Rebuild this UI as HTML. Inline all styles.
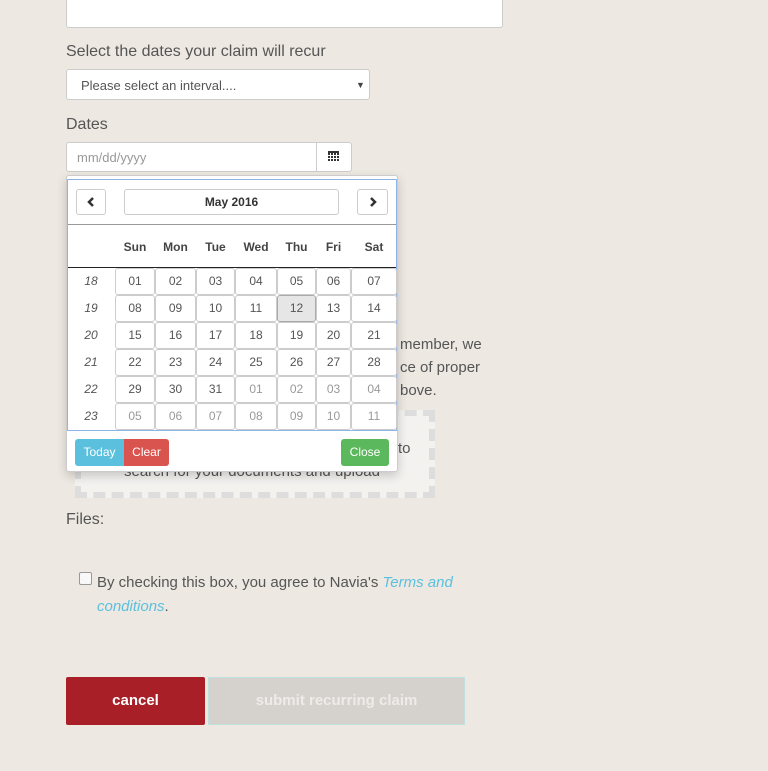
<!DOCTYPE html>
<html><head><style>
body{margin:0;width:768px;height:771px;background:#ede8e2;font-family:"Liberation Sans",sans-serif;color:#444;position:relative;overflow:hidden}
.a{position:absolute}
.lbl{font-size:16px;color:#555}
.box{background:#fff;border:1px solid #ccc;border-radius:3px;box-sizing:border-box}
.cell{position:absolute;background:#fff;border:1px solid #ccc;border-radius:3px;box-sizing:border-box;font-size:12px;color:#555;text-align:center;line-height:25px}
.wk{position:absolute;font-size:12px;font-style:italic;color:#555;width:48px;text-align:center;line-height:27px}
.dn{position:absolute;font-size:12px;font-weight:bold;color:#444;text-align:center;top:240px}
.btn{position:absolute;font-size:12px;color:#fff;text-align:center;line-height:27px;top:439px;height:27px}
.p{font-size:15px;color:#555}
</style></head><body>
<div class="a box" style="left:66px;top:-5px;width:437px;height:33px"></div>
<div class="a lbl" style="left:66px;top:43px">Select the dates your claim will recur</div>
<div class="a box" style="left:66px;top:69px;width:304px;height:31px"></div>
<div class="a" style="left:81px;top:78px;font-size:13px;color:#555">Please select an interval....</div>
<div class="a" style="left:356px;top:80px;font-size:9px;color:#444">▼</div>
<div class="a lbl" style="left:66px;top:116px">Dates</div>
<div class="a box" style="left:66px;top:142px;width:286px;height:30px"></div>
<div class="a" style="left:316px;top:142px;width:1px;height:30px;background:#ccc"></div>
<div class="a" style="left:77px;top:150px;font-size:13px;color:#999">mm/dd/yyyy</div>
<div class="a" style="left:328px;top:151px;width:11px;height:10px;background:#333;border-top:2px solid #333;box-sizing:border-box;background-image:repeating-linear-gradient(90deg,transparent 0 2px,#fff 2px 3px),repeating-linear-gradient(0deg,transparent 0 2px,#fff 2px 3px)"></div>

<div class="a p" style="left:400px;top:333px;line-height:23px">member, we<br>ce of proper<br>bove.</div>
<div class="a" style="left:75px;top:410px;width:360px;height:88px;background:#f4f2ef;border:6px dashed #ddd;box-sizing:border-box"></div>
<div class="a p" style="left:398px;top:440px">to</div>
<div class="a p" style="left:124px;top:463px">search for your documents and upload</div>

<div class="a" style="left:66px;top:175px;width:332px;height:297px;background:#fff;border:1px solid #ccc;border-radius:3px;box-shadow:0 4px 10px rgba(0,0,0,.18);box-sizing:border-box"></div>
<div class="a" style="left:67px;top:179px;width:330px;height:252px;border:1px solid #8fb4e8;box-sizing:border-box"></div>
<div class="a box" style="left:76px;top:189px;width:30px;height:26px"><svg width="28" height="24" style="position:absolute;left:0;top:0"><path d="M16 8 L12 12 L16 16" stroke="#333" stroke-width="2.5" fill="none"/></svg></div>
<div class="a box" style="left:124px;top:189px;width:215px;height:26px;text-align:center;font-weight:bold;font-size:12px;line-height:24px;color:#333">May 2016</div>
<div class="a box" style="left:357px;top:189px;width:31px;height:26px"><svg width="29" height="24" style="position:absolute;left:0;top:0"><path d="M13 8 L17 12 L13 16" stroke="#333" stroke-width="2.5" fill="none"/></svg></div>
<div class="a" style="left:68px;top:224px;width:328px;height:1px;background:#999"></div>
<div class="a" style="left:68px;top:267px;width:328px;height:1px;background:#222"></div>
<div class="dn" style="left:115px;width:40px">Sun</div>
<div class="dn" style="left:155px;width:41px">Mon</div>
<div class="dn" style="left:196px;width:39px">Tue</div>
<div class="dn" style="left:235px;width:42px">Wed</div>
<div class="dn" style="left:277px;width:39px">Thu</div>
<div class="dn" style="left:316px;width:35px">Fri</div>
<div class="dn" style="left:351px;width:46px">Sat</div>
<div id="g"></div>
<script>
var xs=[115,155,196,235,277,316,351,397],w=['18','19','20','21','22','23'],h='';
var d=[];for(var i=1;i<=31;i++)d.push([i,1]);for(i=1;i<=11;i++)d.push([i,0]);
for(var r=0;r<6;r++){var y=268+r*27;h+='<div class="wk" style="left:67px;top:'+y+'px">'+w[r]+'</div>';
for(var c=0;c<7;c++){var k=d[r*7+c],t=(k[0]<10?'0':'')+k[0];var bg=(k[1]&&k[0]==12)?'background:#e6e6e6;border-color:#aaa;':'';
h+='<div class="cell" style="'+bg+'left:'+xs[c]+'px;top:'+y+'px;width:'+(xs[c+1]-xs[c])+'px;height:27px;color:'+(k[1]?'#555':'#999')+'">'+t+'</div>';}}
document.getElementById('g').outerHTML=h;
</script>
<div class="btn" style="left:75px;width:49px;background:#5bc0de;border-radius:3px 0 0 3px">Today</div>
<div class="btn" style="left:124px;width:45px;background:#d9534f;border-radius:0 3px 3px 0">Clear</div>
<div class="btn" style="left:341px;width:48px;background:#5cb85c;border-radius:3px">Close</div>

<div class="a lbl" style="left:66px;top:511px">Files:</div>
<div class="a" style="left:79px;top:572px;width:11px;height:11px;border:1px solid #999;border-radius:2px;background:#f8f8f8"></div>
<div class="a p" style="left:97px;top:571px;line-height:24px;width:380px">By checking this box, you agree to Navia's <i style="color:#5bc0de">Terms and conditions</i>.</div>
<div class="a" style="left:66px;top:677px;width:139px;height:48px;background:#a91f28;border-radius:2px;color:#fff;font-weight:bold;font-size:15px;text-align:center;line-height:48px">cancel</div>
<div class="a" style="left:208px;top:677px;width:257px;height:48px;background:#d5d2cd;border:1px solid #bfe0df;box-sizing:border-box;color:#eeece9;font-weight:bold;font-size:15px;text-align:center;line-height:46px">submit recurring claim</div>
</body></html>
